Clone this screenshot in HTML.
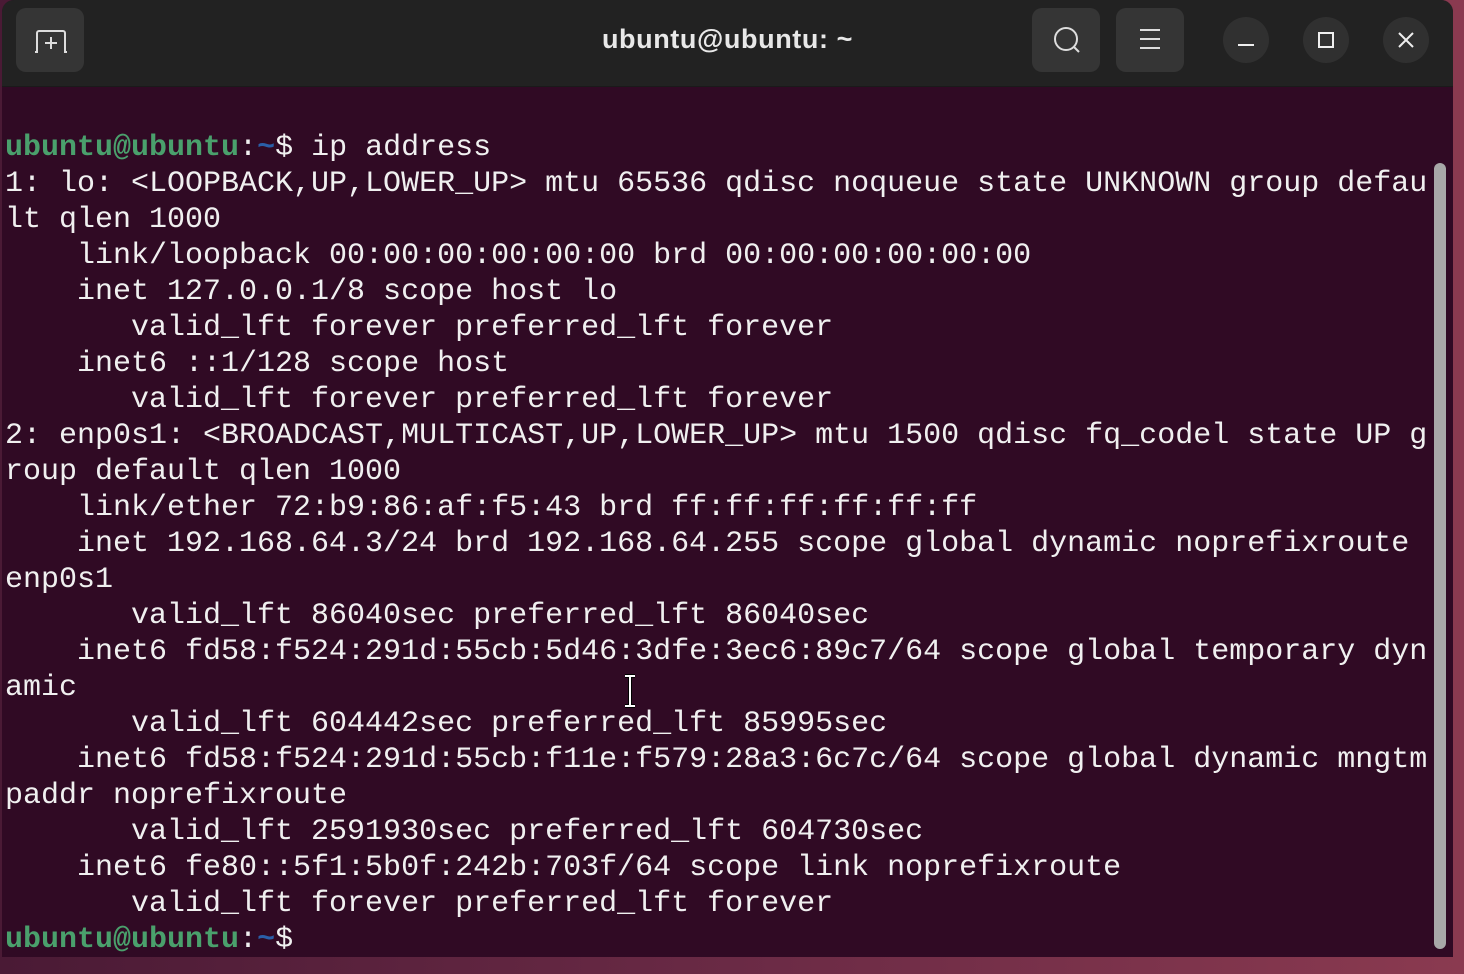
<!DOCTYPE html>
<html><head><style>
html,body{margin:0;padding:0;width:1464px;height:974px;overflow:hidden;background:linear-gradient(90deg,#4a1a35,#6a2a45 50%,#8a3a50);}
.win{position:absolute;left:2px;top:0;width:1451px;height:957px;background:#300a24;border-radius:12px 12px 0 0;overflow:hidden;}
.hdr{position:absolute;left:0;top:0;width:100%;height:86px;background:#222222;border-bottom:1px solid #1a1a1a;}
.btn{position:absolute;top:8px;width:68px;height:64px;border-radius:10px;background:#353535;}
.cb{position:absolute;top:17px;width:46px;height:46px;border-radius:50%;background:#303030;}
.title{position:absolute;left:0;width:100%;top:24px;text-align:center;font:bold 27px "Liberation Sans",sans-serif;color:#e8e8e8;letter-spacing:0.6px;}
pre{position:absolute;left:3px;top:130px;margin:0;font:30px/36px "Liberation Mono",monospace;color:#f0f0f0;white-space:pre;}
.g{color:#4aa06c;font-weight:bold}.b{color:#2a5fa8;font-weight:bold}
.sb{position:absolute;left:1432px;top:163px;width:12px;height:786px;border-radius:6px;background:#a8a8a8;}
</style></head><body>
<div class="win">
<div class="hdr">
<div class="btn" style="left:14px"><svg width="68" height="64"><path d="M21 44V25a2 2 0 0 1 2-2h24a2 2 0 0 1 2 2v19" fill="none" stroke="#ddd" stroke-width="2"/><path d="M19 44h3M48 44h3M35 29v12M29 35h12" stroke="#ddd" stroke-width="2"/></svg></div>
<div class="title">ubuntu@ubuntu: ~</div>
<div class="btn" style="left:1030px"><svg width="68" height="64"><circle cx="34" cy="31" r="11" fill="none" stroke="#ddd" stroke-width="2"/><path d="M42 39l5 5" stroke="#ddd" stroke-width="2"/></svg></div>
<div class="btn" style="left:1114px"><svg width="68" height="64"><path d="M24 22h20M24 31h20M24 40h20" stroke="#ddd" stroke-width="2"/></svg></div>
<div class="cb" style="left:1221px"><svg width="46" height="46"><path d="M15 28h16" stroke="#eee" stroke-width="2"/></svg></div>
<div class="cb" style="left:1301px"><svg width="46" height="46"><rect x="16" y="16" width="14" height="14" fill="none" stroke="#eee" stroke-width="2"/></svg></div>
<div class="cb" style="left:1381px"><svg width="46" height="46"><path d="M16 16l14 14M30 16l-14 14" stroke="#eee" stroke-width="2"/></svg></div>
</div>
<pre><span class="g">ubuntu@ubuntu</span>:<span class="b">~</span>$ ip address
1: lo: &lt;LOOPBACK,UP,LOWER_UP&gt; mtu 65536 qdisc noqueue state UNKNOWN group defau
lt qlen 1000
    link/loopback 00:00:00:00:00:00 brd 00:00:00:00:00:00
    inet 127.0.0.1/8 scope host lo
       valid_lft forever preferred_lft forever
    inet6 ::1/128 scope host
       valid_lft forever preferred_lft forever
2: enp0s1: &lt;BROADCAST,MULTICAST,UP,LOWER_UP&gt; mtu 1500 qdisc fq_codel state UP g
roup default qlen 1000
    link/ether 72:b9:86:af:f5:43 brd ff:ff:ff:ff:ff:ff
    inet 192.168.64.3/24 brd 192.168.64.255 scope global dynamic noprefixroute
enp0s1
       valid_lft 86040sec preferred_lft 86040sec
    inet6 fd58:f524:291d:55cb:5d46:3dfe:3ec6:89c7/64 scope global temporary dyn
amic
       valid_lft 604442sec preferred_lft 85995sec
    inet6 fd58:f524:291d:55cb:f11e:f579:28a3:6c7c/64 scope global dynamic mngtm
paddr noprefixroute
       valid_lft 2591930sec preferred_lft 604730sec
    inet6 fe80::5f1:5b0f:242b:703f/64 scope link noprefixroute
       valid_lft forever preferred_lft forever
<span class="g">ubuntu@ubuntu</span>:<span class="b">~</span>$</pre>
<div class="sb"></div>
<svg style="position:absolute;left:618px;top:674px" width="20" height="34"><path d="M5 2h10M10 2v30M5 32h10" stroke="#000" stroke-width="4"/><path d="M5 2h10M10 2v30M5 32h10" stroke="#fff" stroke-width="2"/></svg>
</div>
</body></html>
